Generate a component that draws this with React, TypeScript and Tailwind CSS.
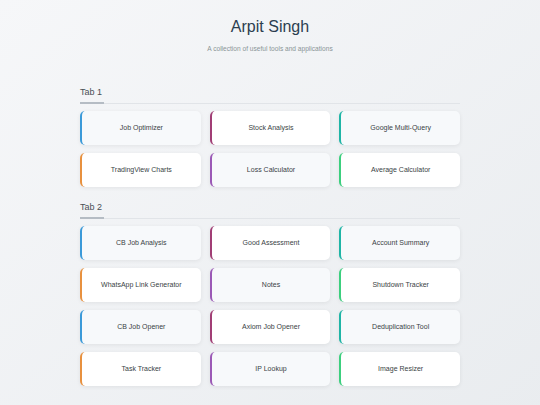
const sections = [
  {
    title: 'Tab 1',
    tools: ['Job Optimizer', 'Stock Analysis', 'Google Multi-Query', 'TradingView Charts', 'Loss Calculator', 'Average Calculator'],
  },
  {
    title: 'Tab 2',
    tools: [
      'CB Job Analysis',
      'Good Assessment',
      'Account Summary',
      'WhatsApp Link Generator',
      'Notes',
      'Shutdown Tracker',
      'CB Job Opener',
      'Axiom Job Opener',
      'Deduplication Tool',
      'Task Tracker',
      'IP Lookup',
      'Image Resizer',
    ],
  },
];

// border colour follows the column and the row parity
const accents = [
  ['border-l-[#3b9ad9]', 'border-l-[#a13e75]', 'border-l-[#1fb5a6]'],
  ['border-l-[#e8913f]', 'border-l-[#9b59b6]', 'border-l-[#3ccf7e]'],
];

function ToolCard({ name, index }: { name: string; index: number }) {
  const row = Math.floor(index / 3);
  const accent = accents[row % 2][index % 3];
  const bg = index % 2 === 0 ? 'bg-[#f7f9fb]' : 'bg-white';
  return (
    <div
      className={`h-[34px] flex items-center justify-center rounded-[5px] border-l-2 ${accent} ${bg} shadow-[0_1px_4px_rgba(0,0,0,0.07)] text-[7px] text-[#3a3f45]`}
    >
      {name}
    </div>
  );
}

export default function App() {
  return (
    <div
      className="min-h-[405px] w-full bg-gradient-to-br from-[#f6f7f9] to-[#e9ecef] pb-[40px]"
      style={{ fontFamily: '"Liberation Sans", Arial, sans-serif' }}
    >
      <div className="mx-auto w-[380px] pt-[17px]">
        <header className="text-center">
          <h1 className="text-[16px] leading-[20px] text-[#2c3e50]">Arpit Singh</h1>
          <p className="mt-[7px] text-[6.6px] leading-[9px] text-[#8a9496]">
            A collection of useful tools and applications
          </p>
        </header>

        {sections.map((section, i) => (
          <section key={section.title} className={i === 0 ? 'mt-[33px]' : 'mt-[14px]'}>
            <div className="flex border-b border-[#e1e4e8]">
              <span className="-mb-px pb-[4px] pr-[2px] border-b-2 border-[#b5bcc4] text-[9px] leading-[12px] text-[#4a4f55]">
                {section.title}
              </span>
            </div>
            <div className="mt-[7px] grid grid-cols-3 gap-x-[9px] gap-y-[8px]">
              {section.tools.map((tool, idx) => (
                <ToolCard key={tool} name={tool} index={idx} />
              ))}
            </div>
          </section>
        ))}
      </div>
    </div>
  );
}
